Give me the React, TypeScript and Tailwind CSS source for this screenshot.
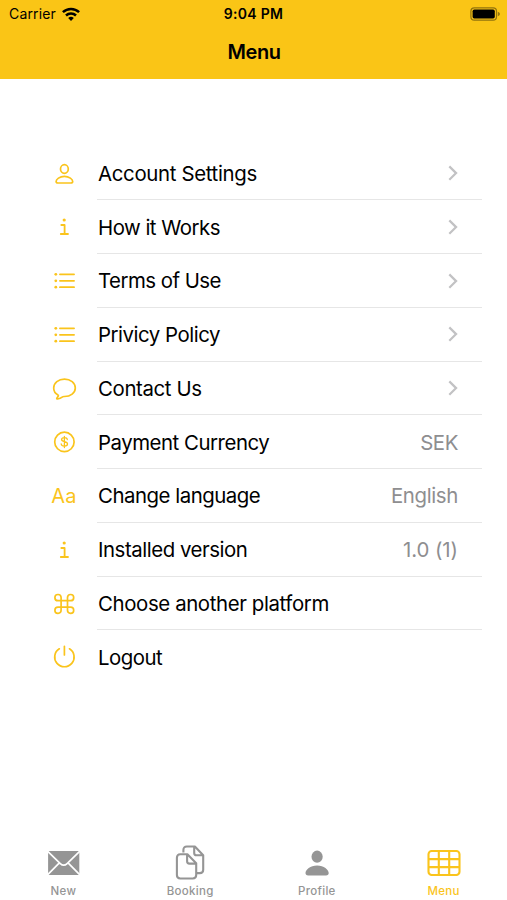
import type { ReactNode } from "react";

type MenuItem = {
  label: string;
  icon: ReactNode;
  tracking: string;
  value?: string;
  valueTracking?: string;
  link?: boolean;
};

const Icon = ({ children }: { children: ReactNode }) => (
  <svg
    viewBox="0 0 28 28"
    className="size-7"
    fill="none"
    stroke="currentColor"
    strokeWidth="1.7"
    strokeLinecap="round"
    strokeLinejoin="round"
  >
    {children}
  </svg>
);

const PersonIcon = () => (
  <Icon>
    <ellipse cx="14.4" cy="9" rx="3.9" ry="4.3" />
    <path d="M14.4 16.4c-4.8 0-8.3 2.9-8.3 5 0 1 .7 1.6 1.9 1.6h12.8c1.2 0 1.9-.6 1.9-1.6 0-2.1-3.5-5-8.3-5Z" />
  </Icon>
);

const InfoIcon = () => (
  <Icon>
    <circle cx="14.2" cy="7" r="1.6" fill="currentColor" stroke="none" />
    <path d="M11.3 12h3.3v9M10.8 21h7.2" strokeWidth="1.8" />
  </Icon>
);

const ListIcon = () => (
  <Icon>
    <path d="M9.9 7.3h14.2M9.9 13.8h14.2M9.9 20.2h14.2" />
    <g fill="currentColor" stroke="none">
      <circle cx="5.8" cy="7.3" r="1.4" />
      <circle cx="5.8" cy="13.8" r="1.4" />
      <circle cx="5.8" cy="20.2" r="1.4" />
    </g>
  </Icon>
);

const BubbleIcon = () => (
  <Icon>
    <path d="M14.5 4.1c-6 0-10.8 3.9-10.8 8.9 0 3.1 1.7 5.6 4.3 7 .4.2.5.5.3.9-.3.8-.9 1.5-1.4 2.1-.4.6 0 1.1.7 1 2.1-.2 3.7-1.1 5-2.1.4-.3.8-.4 1.3-.4h.6c6 0 10.8-3.6 10.8-8.5s-4.8-8.9-10.8-8.9Z" />
  </Icon>
);

const DollarIcon = () => (
  <Icon>
    <circle cx="14.4" cy="13.9" r="9.7" />
    <path
      d="M17.3 11.5c-.2-1.1-1.3-1.9-2.9-1.9s-2.8.8-2.8 2c0 1.3 1.2 1.7 2.9 2.1 1.8.4 3 .9 3 2.3 0 1.3-1.3 2.1-3.1 2.1s-3-.8-3.2-2.1M14.4 8.4v11.2"
      strokeWidth="1.3"
    />
  </Icon>
);

const CommandIcon = () => (
  <Icon>
    <path d="M11.1 10.7V7.5a3.1 3.1 0 1 0-3.1 3.2h12.6a3.1 3.1 0 1 0-3.1-3.2v12.8a3.1 3.1 0 1 0 3.1-3.2H8a3.1 3.1 0 1 0 3.1 3.2Z" />
  </Icon>
);

const PowerIcon = () => (
  <Icon>
    <path d="M14.4 3.3v8.6M9.3 5.8a9.7 9.7 0 1 0 10.2 0" />
  </Icon>
);

const menuItems: MenuItem[] = [
  { label: "Account Settings", icon: <PersonIcon />, link: true, tracking: "tracking-[-0.33px]" },
  { label: "How it Works", icon: <InfoIcon />, link: true, tracking: "tracking-[-0.5px]" },
  { label: "Terms of Use", icon: <ListIcon />, link: true, tracking: "tracking-[-0.52px]" },
  { label: "Privicy Policy", icon: <ListIcon />, link: true, tracking: "tracking-[-0.47px]" },
  { label: "Contact Us", icon: <BubbleIcon />, link: true, tracking: "tracking-[-0.37px]" },
  {
    label: "Payment Currency",
    icon: <DollarIcon />,
    value: "SEK",
    tracking: "tracking-[-0.47px]",
    valueTracking: "tracking-[-0.4px]",
  },
  {
    label: "Change language",
    icon: <span className="text-[20px] tracking-[0.2px]">Aa</span>,
    value: "English",
    tracking: "tracking-[-0.48px]",
    valueTracking: "tracking-[-0.35px]",
  },
  {
    label: "Installed version",
    icon: <InfoIcon />,
    value: "1.0 (1)",
    tracking: "tracking-[-0.45px]",
    valueTracking: "tracking-[-0.05px]",
  },
  { label: "Choose another platform", icon: <CommandIcon />, tracking: "tracking-[-0.38px]" },
  { label: "Logout", icon: <PowerIcon />, tracking: "tracking-[-0.5px]" },
];

const StatusBar = () => (
  <div className="grid h-[27px] grid-cols-3 items-center px-[7px] text-[14px]">
    <div className="flex items-center gap-[6px] pl-[2px]">
      <span className="tracking-[0.15px]">Carrier</span>
      <svg viewBox="0 0 18 14" className="h-[14px] w-[18px]" fill="none" stroke="currentColor" strokeWidth="2.5">
        <path d="M.9 5.2a11.7 11.7 0 0 1 16.2 0M4 8.5a7.2 7.2 0 0 1 10 0" />
        <path d="M9 13.9 6.2 11a4 4 0 0 1 5.6 0Z" fill="currentColor" stroke="none" />
      </svg>
    </div>
    <span className="text-center font-semibold tracking-[0.3px]">9:04 PM</span>
    <svg viewBox="0 0 31 14" className="h-[14px] w-[31px] justify-self-end">
      <rect x="1.9" y=".9" width="25.6" height="12.2" rx="3.4" fill="none" stroke="#000" strokeOpacity=".42" strokeWidth="1.2" />
      <rect x="3.6" y="2.6" width="22.2" height="8.8" rx="1.7" />
      <path d="M28.8 4.8c1.5.5 2.1 1.2 2.1 2.2s-.6 1.7-2.1 2.2Z" fillOpacity=".4" />
    </svg>
  </div>
);

const MenuRow = ({ item, last }: { item: MenuItem; last: boolean }) => (
  <li className="flex h-[53.75px] pl-[50px] pr-[25px]">
    <div className="flex w-7 items-center justify-center text-[#fac41c]">{item.icon}</div>
    <div
      className={`ml-[19px] flex flex-1 items-center justify-between pl-px pr-6 text-[20.4px] ${
        last ? "" : "border-b border-[#e6e6e6]"
      }`}
    >
      <span className={`pt-[2px] ${item.tracking}`}>{item.label}</span>
      {item.value && <span className={`pt-[2px] text-[#8e8e90] ${item.valueTracking}`}>{item.value}</span>}
      {item.link && (
        <svg viewBox="0 0 10 16" className="h-4 w-[10px] text-[#c2c2c4]" fill="none" stroke="currentColor" strokeWidth="2.2">
          <path d="m1.3 1.4 6.8 6.7-6.8 6.7" />
        </svg>
      )}
    </div>
  </li>
);

const Tab = ({ label, active, children }: { label: string; active?: boolean; children: ReactNode }) => (
  <div className={`flex flex-1 flex-col items-center ${active ? "text-[#fac41c]" : "text-[#959595]"}`}>
    <svg viewBox="0 0 36 38" className="h-[38px] w-9" fill="none" stroke="currentColor" strokeLinejoin="round">
      {children}
    </svg>
    <span className="mt-[2px] text-[11.5px] leading-[14px] font-medium tracking-[0.3px]">{label}</span>
  </div>
);

const TabBar = () => (
  <nav className="flex h-[56px]">
    <Tab label="New">
      <rect x="3.1" y="7" width="31.2" height="24" rx="1" fill="currentColor" stroke="none" />
      <path d="m2.5 7.2 12.8 12.4c2.2 2.1 4.6 2.1 6.8 0L34.9 7.2M2.5 30.8l11.6-11.6M34.9 30.8 23.3 19.2" stroke="#fff" strokeWidth="1.7" />
    </Tab>
    <Tab label="Booking">
      <path
        d="M11.4 8.4V5.9c0-2.2 1.2-3.4 3.4-3.4h8.1l8.3 8.7v14.5c0 2.2-1.2 3.4-3.4 3.4h-3.5M22.2 2.6V9c0 1.5.8 2.3 2.3 2.3h6.6"
        strokeWidth="2.1"
      />
      <path
        d="M4.9 13.8v17.3c0 2.2 1.2 3.4 3.4 3.4h12.5c2.2 0 3.4-1.2 3.4-3.4V19.3l-8.8-9H8.3c-2.2 0-3.4 1.2-3.4 3.5ZM15.1 10.4v6.8c0 1.6.8 2.4 2.4 2.4h6.6"
        strokeWidth="2.1"
      />
    </Tab>
    <Tab label="Profile">
      <ellipse cx="18.1" cy="12.7" rx="5.6" ry="6.1" fill="currentColor" stroke="none" />
      <path d="M18.1 21.4c-6.8 0-11.6 4-11.6 7.7 0 1.6.9 2.3 2.7 2.3H27c1.8 0 2.7-.7 2.7-2.3 0-3.7-4.8-7.7-11.6-7.7Z" fill="currentColor" stroke="none" />
    </Tab>
    <Tab label="Menu" active>
      <rect x="2.5" y="7" width="31" height="24" rx="3.2" strokeWidth="2.1" />
      <path d="M12.8 7v24M23.2 7v24M2.7 15.1h31M2.7 23.1h31" strokeWidth="2.1" />
    </Tab>
  </nav>
);

const App = () => {
  return (
    <div className="flex h-[900px] w-[507px] flex-col bg-white font-['Inter',sans-serif] text-black">
      <header className="h-[79px] bg-[#fac516]">
        <StatusBar />
        <h1 className="pt-[10px] pl-px text-center text-[20px] leading-[30px] font-semibold tracking-[-0.4px]">Menu</h1>
      </header>
      <ul className="flex-1 pt-[67.7px]">
        {menuItems.map((item, index) => (
          <MenuRow key={item.label} item={item} last={index === menuItems.length - 1} />
        ))}
      </ul>
      <TabBar />
    </div>
  );
};

export default App;
